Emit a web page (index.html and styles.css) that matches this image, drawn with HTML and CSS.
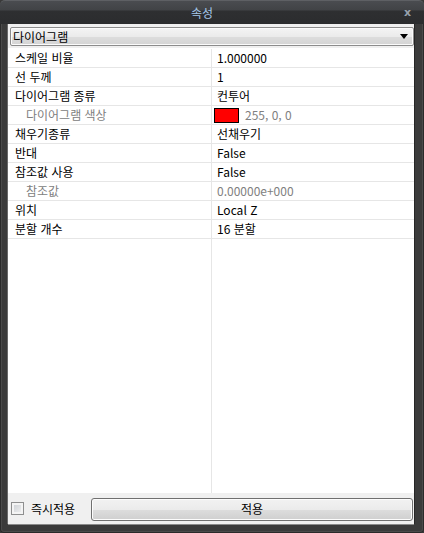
FILE: index.html
```html
<!DOCTYPE html>
<html lang="ko">
<head>
<meta charset="utf-8">
<link rel="stylesheet" href="styles.css">
</head>
<body>
<div class="window">
  <div class="titlebar">
    <span class="title">속성</span>
    <span class="close">x</span>
  </div>
  <div class="panel">
    <div class="combo">
      <span class="combo-text">다이어그램</span>
      <span class="arrow"></span>
    </div>
    <div class="grid">
      <div class="row"><div class="name">스케일 비율</div><div class="value">1.000000</div></div>
      <div class="row"><div class="name">선 두께</div><div class="value">1</div></div>
      <div class="row"><div class="name">다이어그램 종류</div><div class="value">컨투어</div></div>
      <div class="row"><div class="name sub">다이어그램 색상</div><div class="value"><span class="swatch"></span><span class="dim">255, 0, 0</span></div></div>
      <div class="row"><div class="name">채우기종류</div><div class="value">선채우기</div></div>
      <div class="row"><div class="name">반대</div><div class="value">False</div></div>
      <div class="row"><div class="name">참조값 사용</div><div class="value">False</div></div>
      <div class="row"><div class="name sub">참조값</div><div class="value dim">0.00000e+000</div></div>
      <div class="row"><div class="name">위치</div><div class="value">Local Z</div></div>
      <div class="row"><div class="name">분할 개수</div><div class="value">16 분할</div></div>
      <div class="row filler"><div class="name"></div><div class="value"></div></div>
    </div>
    <div class="footer">
      <label class="check"><span class="box"></span><span class="check-label">즉시적용</span></label>
      <button class="apply">적용</button>
    </div>
  </div>
</div>
</body>
</html>
```
FILE: styles.css
```css
html, body {
  margin: 0;
  padding: 0;
  background: #3a3a3a;
}
body {
  width: 424px;
  height: 533px;
  overflow: hidden;
  font-family: "Noto Sans CJK KR", "Noto Sans", sans-serif;
  font-size: 12px;
  color: #000;
}
.window {
  width: 424px;
  height: 533px;
  box-sizing: border-box;
  background: #3b3b3b;
  border-radius: 5px 5px 4px 4px;
  display: flex;
  flex-direction: column;
  box-shadow: inset 0 0 0 1px #2a2a2a, inset 0 0 0 2px #4a4a4a;
}
.titlebar {
  height: 24px;
  flex: none;
  position: relative;
  display: flex;
  align-items: center;
  justify-content: center;
  padding-right: 20px;
  box-sizing: border-box;
  background: linear-gradient(#4a4c50 0, #414346 9px, #2e2f31 10px, #2b2c2e 24px);
  border-radius: 5px 5px 0 0;
  border-top: 1px solid #5e6064;
}
.title {
  color: #a5c7ea;
  font-size: 12px;
  line-height: 16px;
  margin-top: 1px;
}
.close {
  position: absolute;
  right: 13px;
  top: 5px;
  color: #98a2ad;
  font-family: "DejaVu Sans", sans-serif;
  font-weight: bold;
  font-size: 11px;
  line-height: 14px;
}
.panel {
  margin: 0 10px 0 8px;
  height: 500px;
  flex: none;
  background: #f0f0f0;
  display: flex;
  flex-direction: column;
  box-shadow: -1px 0 0 #6a6a6a, 0 -1px 0 #7a7a7a, 1px 0 0 #262626, 0 1px 0 #8a8a8a;
}
.combo {
  margin: 3px 0 0 2px;
  width: 404px;
  height: 19px;
  box-sizing: border-box;
  border: 1px solid #8c8c8c;
  border-radius: 2px;
  background: linear-gradient(#f4f4f4 0, #ebebeb 50%, #dddddd 51%, #d4d4d4 100%);
  box-shadow: inset 0 0 0 1px #fbfbfb;
  display: flex;
  align-items: center;
  padding-left: 2px;
}
.combo-text {
  flex: 1;
  line-height: 16px;
}
.arrow {
  width: 0;
  height: 0;
  border-left: 4px solid transparent;
  border-right: 4px solid transparent;
  border-top: 5px solid #000;
  margin-right: 5px;
}
.grid {
  margin-top: 2px;
  height: 445px;
  box-sizing: border-box;
  padding-top: 1px;
  background: #fff;
  display: flex;
  flex-direction: column;
}
.row {
  display: grid;
  grid-template-columns: 204px 1fr;
  height: 19px;
  box-sizing: border-box;
  border-bottom: 1px solid #e6e6e6;
  flex: none;
}
.row.filler {
  flex: 1;
  border-bottom: none;
}
.name {
  border-right: 1px solid #e6e6e6;
  padding-left: 7px;
  line-height: 18px;
  white-space: nowrap;
}
.name.sub {
  padding-left: 18px;
  color: #808080;
}
.value {
  padding-left: 5px;
  line-height: 18px;
  white-space: nowrap;
  display: flex;
  align-items: center;
}
.dim {
  color: #808080;
}
.swatch {
  width: 25px;
  height: 15px;
  box-sizing: border-box;
  border: 1px solid #000;
  background: #ff0000;
  margin-left: -3px;
  margin-right: 6px;
}
.footer {
  flex: 1;
  display: flex;
  align-items: center;
  padding: 0 1px 0 3px;
}
.check {
  display: flex;
  align-items: center;
}
.box {
  width: 13px;
  height: 13px;
  box-sizing: border-box;
  border: 1px solid #8e8f8f;
  background: linear-gradient(135deg, #c9cdd2, #f4f4f4);
  box-shadow: inset 0 0 0 2px #f4f4f4;
}
.check-label {
  margin-left: 7px;
  line-height: 16px;
}
.apply {
  margin-left: auto;
  width: 322px;
  height: 23px;
  margin-top: 1px;
  border: 1px solid #707070;
  border-radius: 3px;
  background: linear-gradient(#f2f2f2 0, #ebebeb 50%, #dddddd 51%, #cfcfcf 100%);
  box-shadow: inset 0 0 0 1px #fcfcfc;
  font-family: "Noto Sans CJK KR", "Noto Sans", sans-serif;
  font-size: 12px;
  color: #000;
  padding: 0;
  line-height: 18px;
}
```
